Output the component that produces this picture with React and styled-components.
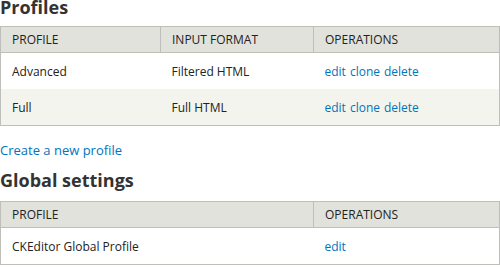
import React from "react";
import styled, { createGlobalStyle } from "styled-components";

const Global = createGlobalStyle`
  html, body { margin: 0; padding: 0; background: #fff; }
  body { font-family: "Open Sans", "DejaVu Sans", sans-serif; color: #222; font-size: 12px; }
`;

const Page = styled.div`
  padding-top: 1px;
  margin-top: -6px;
`;

const Heading = styled.h2`
  margin: ${(p) => p.$mt || 0}px 0 ${(p) => p.$mb || 7}px;
  font-size: 18px;
  line-height: 24px;
  font-weight: 700;
  color: #333;
`;

const Table = styled.table`
  width: 500px;
  border-collapse: collapse;
  border: 1px solid #bfbfba;
  margin-bottom: ${(p) => p.$mb || 0}px;
`;

const Th = styled.th`
  background: #e1e2dc;
  border: 1px solid #bfbfba;
  height: 25px;
  padding: 0 11px;
  text-align: left;
  font-weight: 400;
  text-transform: uppercase;
  color: #222;
  width: ${(p) => p.$w || "auto"};
`;

const Row = styled.tr`
  background: ${(p) => (p.$even ? "#f3f4ee" : "#fff")};
`;

const Td = styled.td`
  height: 36px;
  padding: 0 11px;
  color: #222;
`;

const Link = styled.a`
  color: #0074bd;
  text-decoration: none;
  margin-right: 4px;
`;

const Create = styled.a`
  display: block;
  color: #0074bd;
  text-decoration: none;
  font-size: 13px;
  line-height: 18px;
`;

const profiles = [
  { name: "Advanced", format: "Filtered HTML" },
  { name: "Full", format: "Full HTML" },
];

export default function App() {
  return (
    <Page>
      <Global />
      <Heading>Profiles</Heading>
      <Table $mb={15}>
        <thead>
          <tr>
            <Th $w="137px">Profile</Th>
            <Th $w="130px">Input format</Th>
            <Th>Operations</Th>
          </tr>
        </thead>
        <tbody>
          {profiles.map((p, i) => (
            <Row key={p.name} $even={i % 2 === 1}>
              <Td>{p.name}</Td>
              <Td>{p.format}</Td>
              <Td>
                <Link href="#">edit</Link>
                <Link href="#">clone</Link>
                <Link href="#">delete</Link>
              </Td>
            </Row>
          ))}
        </tbody>
      </Table>
      <Create href="#">Create a new profile</Create>
      <Heading $mt={9} $mb={9}>Global settings</Heading>
      <Table>
        <thead>
          <tr>
            <Th $w="290px">Profile</Th>
            <Th>Operations</Th>
          </tr>
        </thead>
        <tbody>
          <Row>
            <Td>CKEditor Global Profile</Td>
            <Td>
              <Link href="#">edit</Link>
            </Td>
          </Row>
        </tbody>
      </Table>
    </Page>
  );
}
